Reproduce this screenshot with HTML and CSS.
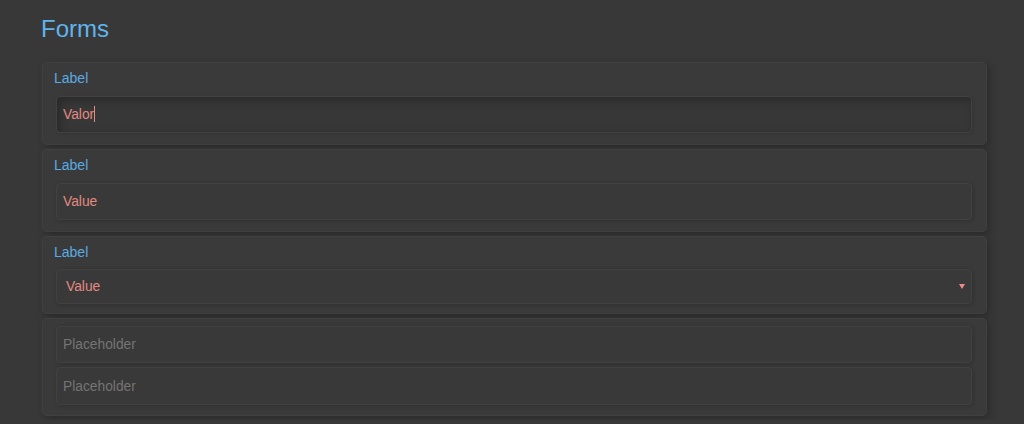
FILE: index.html
```html
<!DOCTYPE html>
<html lang="pt">
<head>
    <meta charset="UTF-8">
    <meta name="viewport" content="width=device-width, initial-scale=1.0">
    <title>Forms</title>
    <link rel="stylesheet" href="styles.css">
</head>
<body>
    <div class="page">
        <h1 class="title">Forms</h1>

        <div class="card">
            <label class="label">Label</label>
            <input class="field field-focus" type="text" value="Valor"><span class="caret"></span>
        </div>

        <div class="card">
            <label class="label">Label</label>
            <input class="field" type="text" value="Value">
        </div>

        <div class="card card-select">
            <label class="label">Label</label>
            <div class="select-wrap">
                <select class="field select">
                    <option>Value</option>
                </select>
            </div>
        </div>

        <div class="card card-stack">
            <input class="field" type="text" placeholder="Placeholder">
            <input class="field field-tall" type="text" placeholder="Placeholder">
        </div>
    </div>
</body>
</html>
```

FILE: styles.css
```css
body {
    margin: 0;
    padding: 0;
    background-color: #383838;
    font-family: "Liberation Sans", Arial, sans-serif;
}

.page {
    margin: 0 37px 0 41px;
    padding-top: 15px;
}

.title {
    margin: 0 0 19px 0;
    font-size: 24px;
    line-height: 28px;
    font-weight: normal;
    color: #5fb4ee;
}

.card {
    position: relative;
    display: flex;
    flex-direction: column;
    margin: 0 0 4px 1px;
    padding: 5px 14px 11px 13px;
    background-color: #3a3a3a;
    border: 1px solid #404040;
    border-radius: 5px;
    box-shadow: 3px 3px 8px rgba(0, 0, 0, 0.22), -1px -1px 3px rgba(80, 80, 80, 0.15);
}

.label {
    font-size: 14px;
    line-height: 20px;
    color: #5aabe5;
    margin: 0 0 8px -2px;
}

.field {
    box-sizing: border-box;
    width: 100%;
    height: 37px;
    padding: 0 6px;
    font-family: "Liberation Sans", Arial, sans-serif;
    font-size: 13.8px;
    color: #e48a82;
    background-color: #393939;
    border: 1px solid #414141;
    border-radius: 4px;
    outline: none;
    box-shadow: 1px 1px 4px rgba(0, 0, 0, 0.18);
}

.field::placeholder {
    color: #747474;
}

.field-focus {
    background-color: #373737;
    box-shadow: inset 3px 3px 8px rgba(0, 0, 0, 0.28), 1px 1px 3px rgba(0, 0, 0, 0.12);
}

.caret {
    position: absolute;
    left: 51px;
    top: 43px;
    width: 1px;
    height: 16px;
    background-color: #e48a82;
}

.card-select {
    padding-bottom: 9px;
}

.select-wrap {
    position: relative;
    margin-top: -1px;
}

.select {
    appearance: none;
    -webkit-appearance: none;
    height: 35px;
    padding-left: 9px;
}

.select-wrap::after {
    content: "";
    position: absolute;
    right: 7px;
    top: 15px;
    border-left: 3px solid transparent;
    border-right: 3px solid transparent;
    border-top: 5px solid #f08a8a;
}

.card-stack {
    padding: 7px 14px 10px 13px;
    gap: 4px;
}

.field-tall {
    height: 38px;
}
```
